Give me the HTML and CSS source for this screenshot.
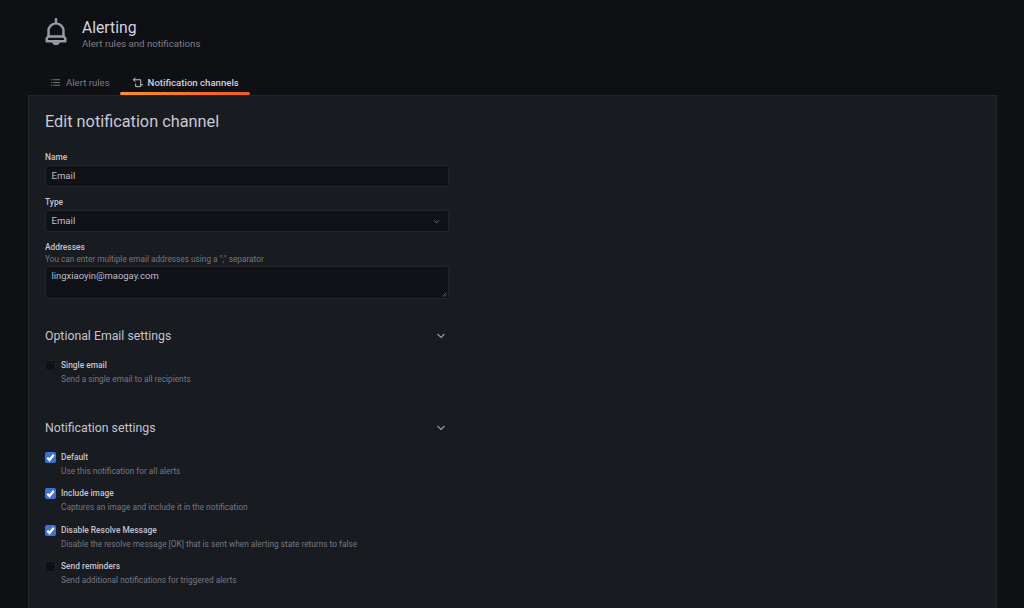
FILE: index.html
```html
<!DOCTYPE html>
<html lang="en">
<head>
<meta charset="utf-8">
<title>Alerting</title>
<link rel="stylesheet" href="styles.css">
</head>
<body>
<div class="page">
  <header class="page-header">
    <svg class="bell" viewBox="0 0 24 24" fill="none" stroke="currentColor" stroke-width="2.1" stroke-linejoin="round" stroke-linecap="round"><path d="M12 1v3"/><path d="M5.6 15.5V11a6.4 6.4 0 0 1 12.8 0v4.500"/><path d="M5.600 15.500 4 17.500V20h16v-2.500l-1.600-2"/><path d="M5.600 15.800h12.800"/><path d="M9.500 20.200a2.600 2.600 0 0 0 5 0"/></svg>
    <div class="titles">
      <h1 class="title">Alerting</h1>
      <div class="subtitle">Alert rules and notifications</div>
    </div>
  </header>
  <nav class="tabs">
    <a class="tab">
      <svg class="tab-icon" viewBox="0 0 12 12" fill="none" stroke="currentColor" stroke-width="1"><path d="M1 3h1.500M1 6h1.500M1 9h1.500M3.500 3H11M3.500 6H11M3.500 9H11"/></svg>
      Alert rules
    </a>
    <a class="tab tab-active">
      <svg class="tab-icon" viewBox="0 0 12 12" fill="none" stroke="currentColor" stroke-width="1" stroke-linecap="round" stroke-linejoin="round"><path d="M3.500 1 1.500 3l2 2"/><path d="M1.500 3H9.500V10.500H4V7.500"/><path d="M9.500 8.500H11.500"/></svg>
      Notification channels
    </a>
  </nav>
  <main class="panel">
    <h2 class="panel-title">Edit notification channel</h2>

    <div class="field field-first">
      <label class="label">Name</label>
      <div class="input">Email</div>
    </div>
    <div class="field">
      <label class="label">Type</label>
      <div class="input select">Email
        <svg class="select-caret" viewBox="0 0 8 6" fill="none" stroke="currentColor" stroke-width="1"><path d="M1 1.500 4 4.500 7 1.500"/></svg>
      </div>
    </div>
    <div class="field">
      <label class="label">Addresses</label>
      <div class="hint">You can enter multiple email addresses using a ";" separator</div>
      <div class="input textarea">lingxiaoyin@maogay.com
        <svg class="grip" viewBox="0 0 6 6" fill="none" stroke="#8e8e9a" stroke-width=".7"><path d="M0.500 5.500 5.500 .5M3 5.500 5.500 3"/></svg>
      </div>
    </div>

    <section class="group group-optional">
      <div class="group-head">
        <h3 class="group-title">Optional Email settings</h3>
        <svg class="group-caret" viewBox="0 0 10 6" fill="none" stroke="currentColor" stroke-width="1.200"><path d="M1.500 1 5 4.500 8.500 1"/></svg>
      </div>
      <div class="check">
        <span class="box"></span>
        <div>
          <div class="check-label">Single email</div>
          <div class="check-desc">Send a single email to all recipients</div>
        </div>
      </div>
    </section>

    <section class="group group-notify">
      <div class="group-head">
        <h3 class="group-title">Notification settings</h3>
        <svg class="group-caret" viewBox="0 0 10 6" fill="none" stroke="currentColor" stroke-width="1.200"><path d="M1.500 1 5 4.500 8.500 1"/></svg>
      </div>
      <div class="check">
        <span class="box box-on"><svg viewBox="0 0 11 11" fill="none" stroke="#fff" stroke-width="2.200"><path d="M2.300 5.800 4.500 8 8.800 2.800"/></svg></span>
        <div>
          <div class="check-label">Default</div>
          <div class="check-desc">Use this notification for all alerts</div>
        </div>
      </div>
      <div class="check">
        <span class="box box-on"><svg viewBox="0 0 11 11" fill="none" stroke="#fff" stroke-width="2.200"><path d="M2.300 5.800 4.500 8 8.800 2.800"/></svg></span>
        <div>
          <div class="check-label">Include image</div>
          <div class="check-desc">Captures an image and include it in the notification</div>
        </div>
      </div>
      <div class="check">
        <span class="box box-on"><svg viewBox="0 0 11 11" fill="none" stroke="#fff" stroke-width="2.200"><path d="M2.300 5.800 4.500 8 8.800 2.800"/></svg></span>
        <div>
          <div class="check-label">Disable Resolve Message</div>
          <div class="check-desc">Disable the resolve message [OK] that is sent when alerting state returns to false</div>
        </div>
      </div>
      <div class="check">
        <span class="box"></span>
        <div>
          <div class="check-label">Send reminders</div>
          <div class="check-desc">Send additional notifications for triggered alerts</div>
        </div>
      </div>
    </section>
  </main>
</div>
</body>
</html>
```

FILE: styles.css
```css
* { box-sizing: border-box; }
html, body { margin: 0; height: 100%; }
body {
  background: #0f1014;
  color: #ccccdc;
  font-family: Roboto, "Liberation Sans", sans-serif;
  font-size: 9.600px;
  overflow: hidden;
}
.page { height: 608px; padding: 16px 27px 0 28px; display: flex; flex-direction: column; }
.page-header { display: flex; align-items: flex-start; height: 50px; padding-left: 14px; gap: 12px; }
.bell { width: 28px; height: 28px; color: #9a9aa6; flex: none; margin-top: 2px; }
.titles { padding-top: 2px; }
.title { margin: 0; font-size: 15.700px; font-weight: 400; line-height: 20px; color: #d4d4e0; }
.subtitle { font-size: 9.700px; line-height: 13px; margin-top: -1px; color: #7f7f89; }
.tabs { display: flex; height: 29px; padding-left: 12px; gap: 0; }
.tab { display: flex; align-items: center; gap: 5px; padding: 3px 11px 0 10px; height: 29px; font-size: 9.600px; color: #7c7c86; position: relative; }
.tab-icon { width: 11px; height: 11px; flex: none; }
.tab-active { color: #d0d0dc; font-weight: 500; padding: 3px 11px 0 11px; }
.tab-active::after { content: ""; position: absolute; left: -0.500px; right: 0; bottom: 0; height: 3px; border-radius: 2px; background: linear-gradient(90deg, #f8902a, #f05a28); }
.panel { flex: 1; background: #181b20; border: 1px solid #23262b; border-bottom: 0; padding: 15px 16px 0; overflow: hidden; }
.panel-title { margin: 0; font-size: 16.300px; font-weight: 400; line-height: 22px; color: #c9c9d6; }
.field { width: 404px; margin-top: 9px; }
.field-first { margin-top: 18px; }
.label { display: block; font-size: 8.400px; font-weight: 500; line-height: 12px; margin-bottom: 2px; color: #c4c4d2; }
.hint { font-size: 8.250px; line-height: 12px; margin-top: -2px; margin-bottom: 1px; color: #777781; }
.input { height: 22px; background: #111217; border: 1px solid #22252a; border-radius: 1.500px; padding: 0 6px 0 5.500px; font-size: 9.600px; line-height: 20px; color: #bebeca; position: relative; }
.select { display: flex; justify-content: space-between; align-items: center; padding-right: 8px; }
.select-caret { width: 7px; height: 5px; color: #8a8a94; }
.textarea { height: 33px; line-height: 15px; padding-top: 1px; font-size: 9.450px; }
.grip { width: 5px; height: 5px; position: absolute; right: 1px; bottom: 1px; }
.group { width: 404px; }
.group-optional { margin-top: 27px; }
.group-notify { margin-top: 22px; }
.group-head { display: flex; justify-content: space-between; align-items: center; height: 20px; padding-right: 3px; margin-bottom: 13px; }
.group-title { margin: 0; font-size: 12.300px; font-weight: 400; color: #c4c4d0; }
.group-caret { width: 10px; height: 6px; color: #9a9aa6; }
.check { display: flex; gap: 5px; height: 36.600px; }
.box { width: 11px; height: 11px; border-radius: 1.500px; background: #101116; border: 1px solid #1f2227; flex: none; margin-top: 1px; display: block; }
.box-on { background: #3d71d9; border-color: #3d71d9; }
.box-on svg { display: block; width: 11px; height: 11px; margin: -1px; }
.check-label { font-size: 8.400px; font-weight: 500; line-height: 12px; color: #c4c4d2; }
.check-desc { font-size: 8.300px; line-height: 12px; margin-top: 2px; color: #777781; }
```
